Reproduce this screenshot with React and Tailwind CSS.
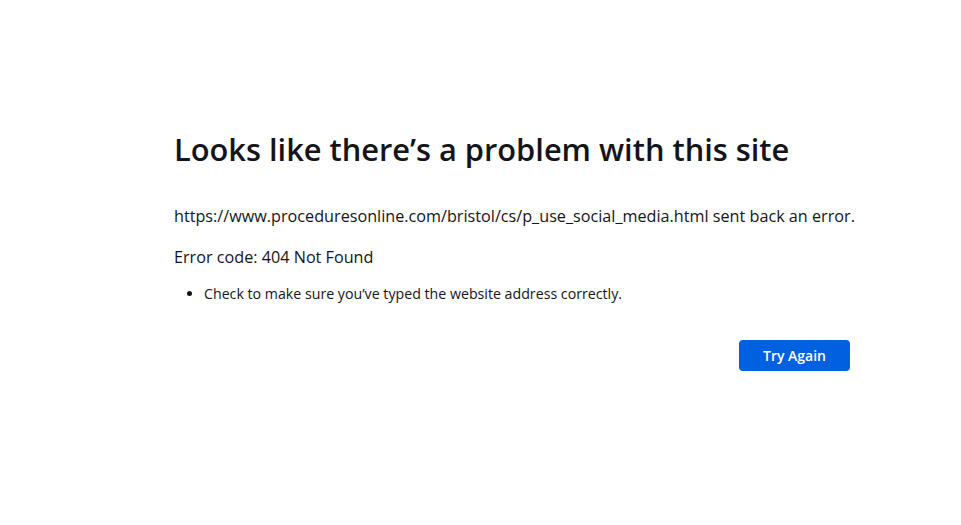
import React from "react";

export default function App() {
  return (
    <div className="min-h-screen bg-white text-[#15141a] font-['Open_Sans',sans-serif]">
      <div className="ml-[174px] w-[676px] pt-[125px]">
        <h1 className="text-[30.8px] font-semibold leading-[48px]">
          Looks like there’s a problem with this site
        </h1>
        <p className="mt-[31px] whitespace-nowrap text-[16.2px] leading-[24px]">
          https://www.proceduresonline.com/bristol/cs/p_use_social_media.html sent back an error.
        </p>
        <p className="mt-[17px] text-[16.2px] leading-[24px]">Error code: 404 Not Found</p>
        <ul className="mt-[15px] list-disc pl-[30px] text-[14.2px] leading-[20px]">
          <li>Check to make sure you’ve typed the website address correctly.</li>
        </ul>
        <div className="mt-[36px] flex justify-end">
          <button className="h-[31px] w-[111px] rounded-[4px] bg-[#0061e0] text-[14px] font-semibold text-white">
            Try Again
          </button>
        </div>
      </div>
    </div>
  );
}
